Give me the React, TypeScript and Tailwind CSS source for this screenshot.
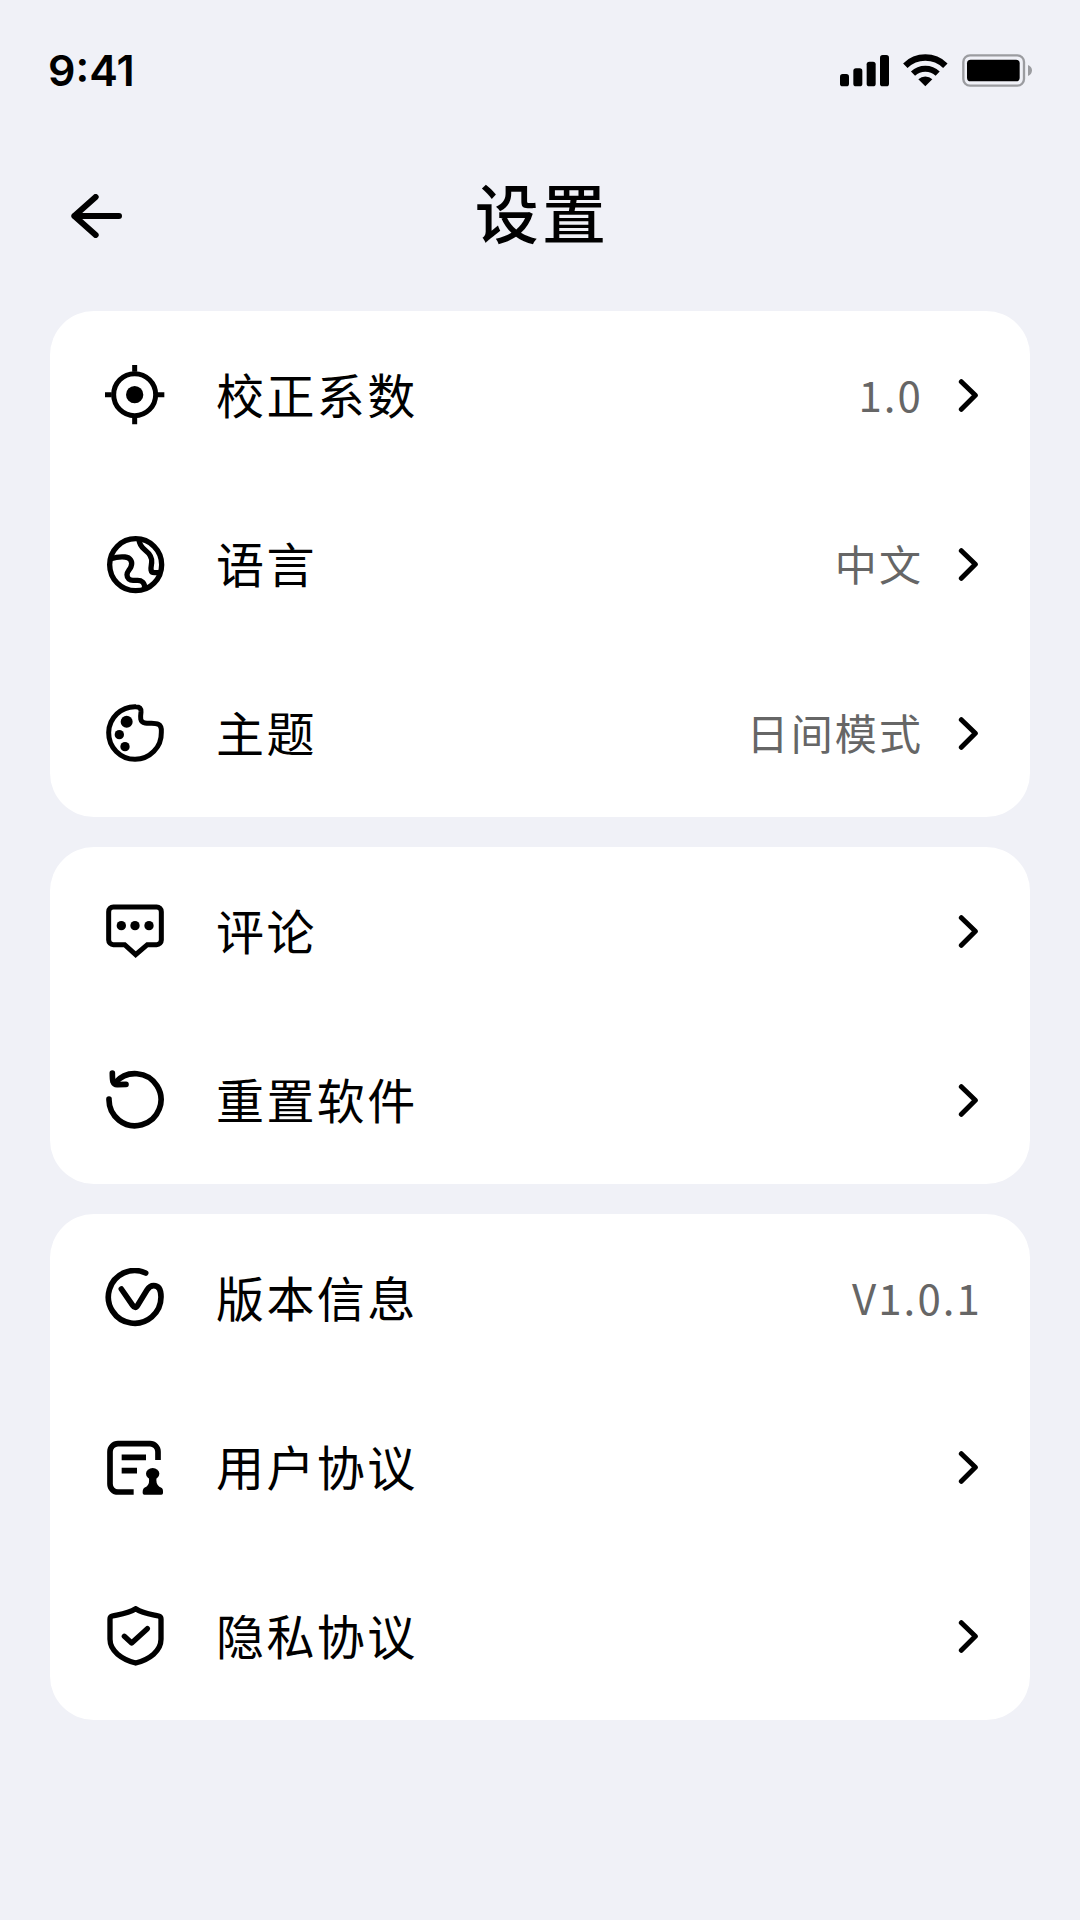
import React from 'react';

const TargetIcon = () => (
  <svg className="size-[60px] shrink-0" viewBox="0 0 180 180" fill="none" stroke="currentColor" strokeWidth="15" aria-hidden="true">
    <circle cx="89" cy="89" r="63" />
    <circle cx="89" cy="89" r="26" fill="currentColor" stroke="none" />
    <path d="M89 0V20M89 158V178M0 89H20M158 89H178" />
  </svg>
);

const GlobeIcon = () => (
  <svg className="size-[60px] shrink-0" viewBox="0 0 180 180" fill="none" stroke="currentColor" strokeWidth="16" aria-hidden="true">
    <circle cx="92" cy="92" r="78" />
    <path d="M18 74C30 70 48 68 60 69C76 70 84 84 78 98C74 108 66 112 66 122C66 134 74 139 84 139H98C110 139 119 146 119 160" />
    <path d="M102 16C103 32 110 40 120 48C134 59 142 70 140 86C138 100 134 116 148 116H164" />
  </svg>
);

const PaletteIcon = () => (
  <svg className="size-[60px] shrink-0" viewBox="0 0 180 180" fill="none" stroke="currentColor" strokeWidth="15" aria-hidden="true">
    <path d="M93 11C103 11 109 17 108 27C106 42 104 58 120 60C136 62 150 58 160 64C168 68 170 76 169 88A79 79 0 1 1 93 11Z" />
    <g fill="currentColor" stroke="none">
      <circle cx="65" cy="56" r="18" />
      <circle cx="43" cy="95" r="14" />
      <circle cx="60" cy="131" r="14" />
    </g>
  </svg>
);

const CommentIcon = () => (
  <svg className="size-[60px] shrink-0" viewBox="0 0 180 180" fill="none" stroke="currentColor" strokeWidth="15" aria-hidden="true">
    <path d="M25 18H155A14 14 0 0 1 169 32V117A14 14 0 0 1 155 131H127L92 161L59 131H25A14 14 0 0 1 11 117V32A14 14 0 0 1 25 18Z" />
    <g fill="currentColor" stroke="none">
      <circle cx="49" cy="74" r="14" />
      <circle cx="90" cy="74" r="14" />
      <circle cx="132" cy="74" r="14" />
    </g>
  </svg>
);

const ResetIcon = () => (
  <svg className="size-[60px] shrink-0" viewBox="0 0 180 180" fill="none" stroke="currentColor" strokeWidth="17" strokeLinecap="round" strokeLinejoin="round" aria-hidden="true">
    <path d="M12 87A78 78 0 1 0 31 38" />
    <path d="M22 9C22 20 22 28 24 35Q28 45 38 44L63 43" />
  </svg>
);

const VersionIcon = () => (
  <svg className="size-[60px] shrink-0" viewBox="0 0 180 180" fill="none" stroke="currentColor" strokeWidth="17" strokeLinecap="round" strokeLinejoin="round" aria-hidden="true">
    <path d="M122 15A79 79 0 1 0 168 87C168 64 160 53 146 53C136 53 131 58 126 66L98 112Q91 124 83 112L49 63" />
  </svg>
);

const AgreementIcon = () => (
  <svg className="size-[60px] shrink-0" viewBox="0 0 180 180" fill="none" stroke="currentColor" strokeWidth="17" aria-hidden="true">
    <path d="M86 165H39A24 24 0 0 1 15 141V44A24 24 0 0 1 39 20H135A24 24 0 0 1 159 44V69" />
    <path d="M50 61H123M50 101H96" />
    <g fill="currentColor" stroke="none">
      <ellipse cx="143" cy="110" rx="20" ry="17" />
      <path d="M131 120Q136 140 124 149Q113 152 113 164V168Q113 173 118 173H169Q174 173 174 168V162Q174 152 163 149Q151 140 155 120Z" />
    </g>
  </svg>
);

const ShieldIcon = () => (
  <svg className="size-[60px] shrink-0" viewBox="0 0 180 180" fill="none" stroke="currentColor" strokeWidth="16" strokeLinecap="round" strokeLinejoin="round" aria-hidden="true">
    <path d="M92 8C70 22 44 25 22 30Q15 32 15 39V100C15 135 50 160 92 171C134 160 168 135 168 100V39Q168 32 161 30C139 25 113 22 92 8Z" />
    <path d="M58 91L80 111L127 68" />
  </svg>
);

const Chevron = () => (
  <svg className="ml-7 h-[33px] w-[35px] shrink-0" viewBox="0 0 105 99" fill="none" stroke="currentColor" strokeWidth="15" strokeLinecap="round" strokeLinejoin="round" aria-hidden="true">
    <path d="M31 8L73 49L31 91" />
  </svg>
);

type Item = {
  label: string;
  icon: React.ComponentType;
  value?: string;
  readOnly?: boolean;
};

const groups: Item[][] = [
  [
    { label: '校正系数', icon: TargetIcon, value: '1.0' },
    { label: '语言', icon: GlobeIcon, value: '中文' },
    { label: '主题', icon: PaletteIcon, value: '日间模式' },
  ],
  [
    { label: '评论', icon: CommentIcon },
    { label: '重置软件', icon: ResetIcon },
  ],
  [
    { label: '版本信息', icon: VersionIcon, value: 'V1.0.1', readOnly: true },
    { label: '用户协议', icon: AgreementIcon },
    { label: '隐私协议', icon: ShieldIcon },
  ],
];

const StatusBar = () => (
  <div className="flex h-[140px] items-center justify-between px-12">
    <span className="font-['Inter',sans-serif] text-[43px] leading-none font-semibold">9:41</span>
    <div className="flex items-center gap-[14px]">
      <svg className="h-[33px] w-[49px]" viewBox="0 0 147 99" fill="currentColor" aria-hidden="true">
        <rect x="0" y="60" width="27" height="37" rx="8" />
        <rect x="40" y="43" width="27" height="54" rx="8" />
        <rect x="80" y="23" width="27" height="74" rx="8" />
        <rect x="120" y="3" width="27" height="94" rx="8" />
      </svg>
      <svg className="h-[33px] w-[45px]" viewBox="0 0 135 99" fill="none" stroke="currentColor" aria-hidden="true">
        <path d="M7 35A86 86 0 0 1 127 35" strokeWidth="19" />
        <path d="M30 59A54 54 0 0 1 104 59" strokeWidth="18" />
        <path d="M67 97L46 76A31 31 0 0 1 88 76Z" fill="currentColor" stroke="none" />
      </svg>
      <svg className="h-[33px] w-[70px]" viewBox="0 0 210 99" fill="none" aria-hidden="true">
        <rect x="4" y="4" width="182" height="91" rx="20" stroke="#9b9ca0" strokeWidth="7" />
        <rect x="15" y="17" width="158" height="65" rx="11" fill="currentColor" />
        <path d="M198 33C206 36 210 42 210 49C210 57 206 63 198 66Z" fill="#9b9ca0" />
      </svg>
    </div>
  </div>
);

const SettingRow = ({ item }: { item: Item }) => {
  const Icon = item.icon;
  const content = (
    <>
      <Icon />
      <span className="ml-[51px] pb-1 text-5xl tracking-wider">{item.label}</span>
      <span className="ml-auto pb-1 text-[42px] tracking-wider text-[#666]">{item.value}</span>
    </>
  );

  if (item.readOnly) {
    return <div className="flex h-[168px] w-full items-center pr-12 pl-[55px]">{content}</div>;
  }

  return (
    <button type="button" className="flex h-[168px] w-full cursor-pointer items-center pr-[44px] pl-[55px] text-left">
      {content}
      <Chevron />
    </button>
  );
};

export default function App() {
  return (
    <div className="min-h-screen bg-[#f0f1f7] pb-[200px] font-['Noto_Sans_CJK_SC',sans-serif] text-black">
      <StatusBar />
      <header className="mb-[27px] grid h-[144px] grid-cols-[1fr_auto_1fr] items-center px-[71px]">
        <button type="button" aria-label="返回" className="w-fit cursor-pointer pt-2">
          <svg className="h-[44px] w-[51px]" viewBox="0 0 153 132" fill="none" stroke="currentColor" strokeWidth="18" strokeLinecap="round" strokeLinejoin="round" aria-hidden="true">
            <path d="M144 66H10M74 9L10 66L74 123" />
          </svg>
        </button>
        <h1 className="pb-1 pl-1 text-[64px] leading-none font-medium tracking-wider">设置</h1>
      </header>
      <main className="flex flex-col gap-[30px] px-[50px]">
        {groups.map((items, index) => (
          <ul key={index} className="flex flex-col gap-px rounded-[44px] bg-white">
            {items.map((item) => (
              <li key={item.label}>
                <SettingRow item={item} />
              </li>
            ))}
          </ul>
        ))}
      </main>
    </div>
  );
}
